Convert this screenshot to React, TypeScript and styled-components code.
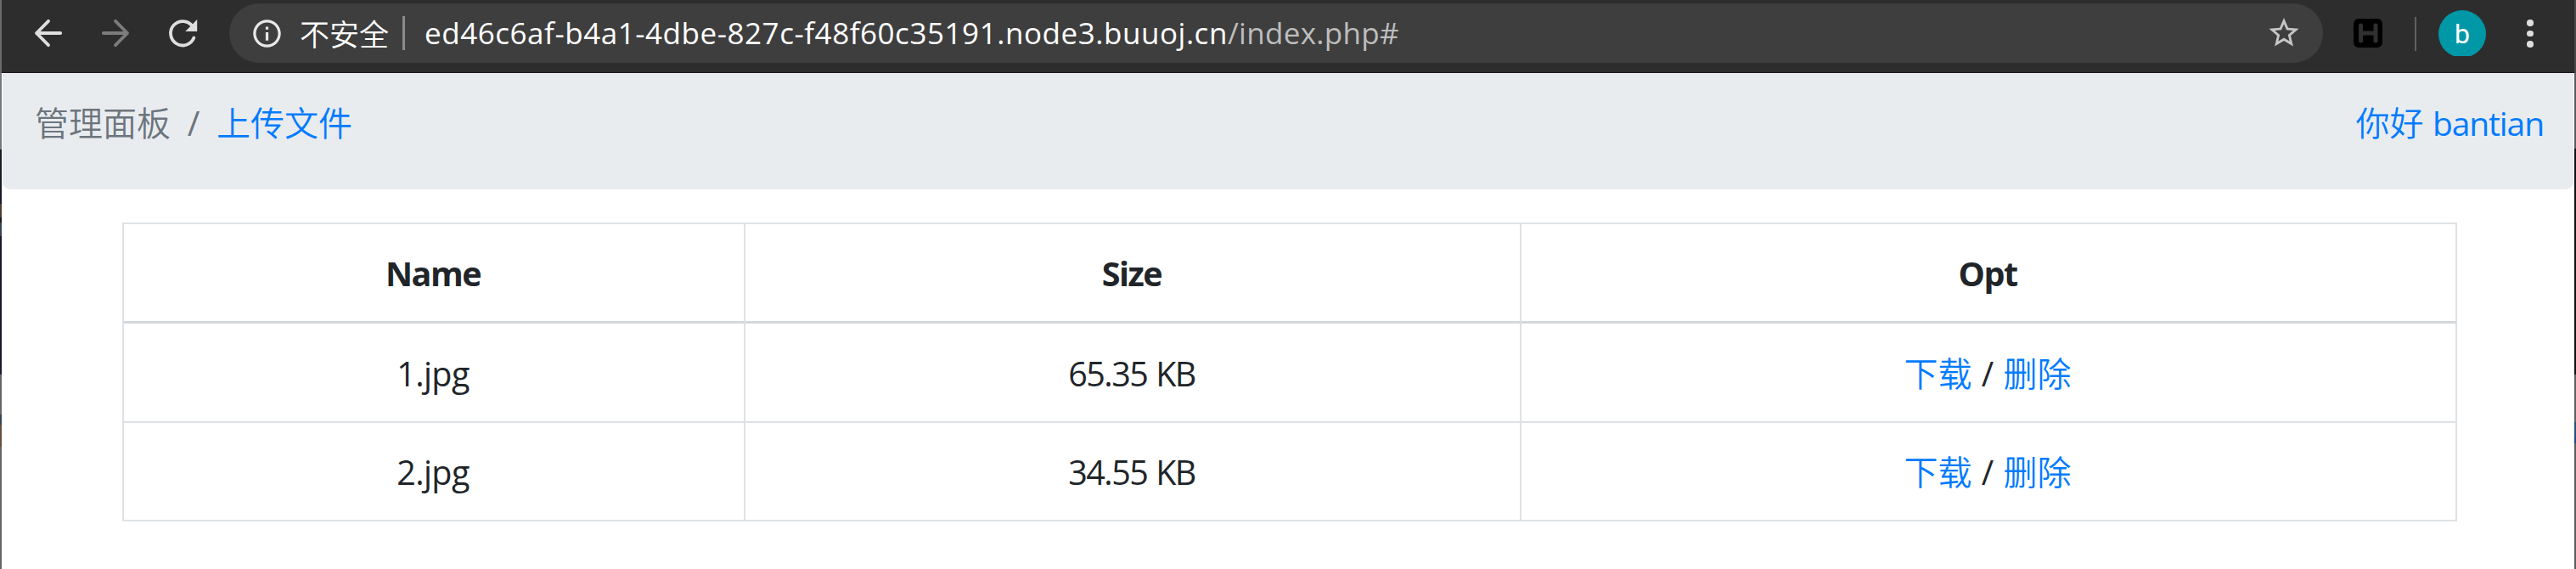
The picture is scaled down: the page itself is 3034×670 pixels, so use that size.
import React from 'react';
import styled, { createGlobalStyle } from 'styled-components';

const Global = createGlobalStyle`
  * { box-sizing: border-box; }
  body { margin: 0; background: #fff; overflow: hidden; }
`;

const latin = `"Open Sans", "Noto Sans CJK SC", sans-serif`;

const Window = styled.div`
  display: grid;
  grid-template-columns: 2px 1fr 2px;
  width: 3034px;
  height: 670px;
  font-family: ${latin};
`;

const LeftEdge = styled.div`
  background: linear-gradient(#6b6b6b 0 86px, #77787a 86px 176px, #1b1b27 176px 240px, #4b3d35 240px 256px,
    #1b1b27 256px 262px, #39434d 262px 278px, #1b1b27 278px 441px, #66676d 441px 488px, #3d4350 488px 500px,
    #66503f 500px 526px, #65666b 526px);
`;

const RightEdge = styled.div`
  background: linear-gradient(#48484a 0 86px, #5c5c5e 86px 175px, #111113 175px 441px, #606062 441px 497px,
    #285078 497px 516px, #1d4a86 516px 522px, #5c5c5e 522px);
`;

const Main = styled.div`
  display: flex;
  flex-direction: column;
  min-width: 0;
`;

const Toolbar = styled.header`
  display: flex;
  align-items: flex-start;
  height: 86px;
  background: #2d2d2d;
  border-bottom: 1px solid #1c1718;
`;

const NavButtons = styled.div`
  display: flex;
  gap: 31px;
  padding: 15px 0 0 31px;
  width: 268px;
`;

const Glyph = styled.svg<{ $size: number }>`
  display: block;
  flex: none;
  width: ${(p) => p.$size}px;
  height: ${(p) => p.$size}px;
`;

const Omnibox = styled.div`
  display: flex;
  align-items: center;
  width: 2466px;
  height: 70px;
  margin-top: 4px;
  padding: 0 22px 0 25px;
  border-radius: 35px;
  background: #3e3e3e;
`;

const Insecure = styled.span`
  width: 106px;
  margin: 0 15px 0 19px;
  font: 350 35px/70px "Noto Sans CJK SC", sans-serif;
  color: #fff;
  white-space: nowrap;
`;

const Divider = styled.span<{ $color: string; $width: number }>`
  flex: none;
  width: ${(p) => p.$width}px;
  height: 40px;
  background: ${(p) => p.$color};
`;

const Url = styled.span`
  flex: 1;
  margin-left: 23px;
  font-size: 35px;
  line-height: 70px;
  color: #fff;
  white-space: nowrap;
`;

const Host = styled.span`
  letter-spacing: 0.54px;
`;

const Path = styled.span`
  color: #bdbdbd;
  letter-spacing: 0.3px;
`;

const Actions = styled.div`
  display: flex;
  padding-left: 36px;
`;

const Extension = styled.div`
  margin-top: 22px;
`;

const ActionDivider = styled(Divider)`
  margin: 20px 26px 0 38px;
`;

const AvatarClip = styled.div`
  height: 54px;
  margin-top: 12px;
  overflow: hidden;
`;

const Avatar = styled.div`
  width: 56px;
  height: 56px;
  border-radius: 50%;
  background: #0097a7;
  color: #fff;
  font: 400 32px/56px Roboto, sans-serif;
  text-align: center;
`;

const Menu = styled.div`
  display: flex;
  flex-direction: column;
  gap: 5px;
  margin: 23px 0 0 48px;
`;

const Dot = styled.span`
  width: 7.5px;
  height: 7.5px;
  border-radius: 50%;
  background: #dedede;
`;

const Breadcrumb = styled.nav`
  display: flex;
  justify-content: space-between;
  height: 137px;
  margin: 0 1px;
  padding: 29px 35px 0 38px;
  border-radius: 0 0 9px 9px;
  background: #e9ecef;
  font-size: 40px;
  font-weight: 350;
  line-height: 60px;
  color: #6c757d;
`;

const Crumbs = styled.div`
  display: flex;
`;

const Slash = styled.span`
  width: 54px;
  font-weight: 400;
  text-align: center;
`;

const Link = styled.a`
  color: #007bff;
  text-decoration: none;
`;

const UserName = styled.span`
  font-size: 39px;
  font-weight: 400;
  letter-spacing: -1.1px;
`;

const Files = styled.table`
  width: 2750px;
  margin: 39px 0 0 142px;
  border-collapse: separate;
  border-spacing: 0;
  border-top: 2px solid #dee2e6;
  border-left: 2px solid #dee2e6;
  table-layout: fixed;
  font-size: 39.5px;
  color: #212529;
  text-align: center;
`;

const Column = styled.col<{ $width: number }>`
  width: ${(p) => p.$width}px;
`;

const HeadCell = styled.th`
  height: 117px;
  padding: 2px 2px 0 0;
  border-right: 2px solid #dee2e6;
  border-bottom: 3px solid #d3d8dc;
  font-weight: 700;
  letter-spacing: -1.5px;
  line-height: 60px;
`;

const Cell = styled.td<{ $tracking?: number }>`
  height: 116.5px;
  padding: 3px 2px 0 0;
  border-right: 2px solid #dee2e6;
  border-bottom: 2px solid #dee2e6;
  font-weight: 400;
  letter-spacing: ${(p) => p.$tracking ?? 0}px;
  word-spacing: 1px;
  line-height: 60px;
`;

const ActionLink = styled(Link)`
  font-size: 40px;
  font-weight: 350;
`;

const files = [
  { name: '1.jpg', size: '65.35 KB' },
  { name: '2.jpg', size: '34.55 KB' },
];

export default function App() {
  return (
    <Window>
      <Global />
      <LeftEdge />
      <Main>
        <Toolbar>
          <NavButtons>
            <Glyph $size={48} viewBox="0 0 24 24" fill="none" stroke="#dedede" strokeWidth="1.9" strokeLinecap="round" strokeLinejoin="round">
              <path d="M19.1 12H5M12 4.9 5 12l7 7.1" />
            </Glyph>
            <Glyph $size={48} viewBox="0 0 24 24" fill="none" stroke="#7c7c7c" strokeWidth="1.9" strokeLinecap="round" strokeLinejoin="round">
              <path d="M4.9 12H19M12 4.9l7 7.1-7 7.1" />
            </Glyph>
            <Glyph $size={48} viewBox="0 0 24 24">
              <path d="M17.8 7.9A7.1 7.1 0 1 0 18.7 14.7" fill="none" stroke="#dedede" strokeWidth="1.9" strokeLinecap="round" />
              <path d="M20.6 4v7h-7z" fill="#dedede" />
            </Glyph>
          </NavButtons>
          <Omnibox>
            <Glyph $size={39} viewBox="0 0 24 24" fill="#e8e8e8">
              <path d="M11 7h2v2h-2zm0 4h2v6h-2zm1-9C6.48 2 2 6.48 2 12s4.48 10 10 10 10-4.48 10-10S17.52 2 12 2zm0 18c-4.41 0-8-3.59-8-8s3.59-8 8-8 8 3.59 8 8-3.59 8-8 8z" />
            </Glyph>
            <Insecure>不安全</Insecure>
            <Divider $color="#8b8b8b" $width={3} />
            <Url>
              <Host>ed46c6af-b4a1-4dbe-827c-f48f60c35191.node3.buuoj.cn</Host>
              <Path>/index.php#</Path>
            </Url>
            <Glyph $size={48} viewBox="0 0 24 24" fill="#c6c6c6">
              <path d="M20.8 9.4l-6.3-.55L12 3 9.5 8.85l-6.3.55 4.8 4.15L6.55 19.8 12 16.5l5.45 3.3L16 13.55zM12 14.7l-3.3 2 .88-3.75-2.9-2.5 3.8-.33L12 6.6l1.5 3.5 3.8.34-2.9 2.5.9 3.76z" />
            </Glyph>
          </Omnibox>
          <Actions>
            <Extension>
              <Glyph $size={34} viewBox="0 0 34 34">
                <rect width="34" height="34" rx="6" fill="#000" />
                <path d="M8.6 8v18M26 8v18M8.6 17H26" stroke="#303030" strokeWidth="5" strokeLinecap="round" />
              </Glyph>
            </Extension>
            <ActionDivider $color="#626062" $width={2} />
            <AvatarClip>
              <Avatar>b</Avatar>
            </AvatarClip>
            <Menu>
              <Dot />
              <Dot />
              <Dot />
            </Menu>
          </Actions>
        </Toolbar>
        <Breadcrumb>
          <Crumbs>
            <span>管理面板</span>
            <Slash>/</Slash>
            <Link>上传文件</Link>
          </Crumbs>
          <Link>
            你好 <UserName>bantian</UserName>
          </Link>
        </Breadcrumb>
        <Files>
          <colgroup>
            <Column $width={732} />
            <Column $width={914} />
            <Column $width={1102} />
          </colgroup>
          <thead>
            <tr>
              <HeadCell>Name</HeadCell>
              <HeadCell>Size</HeadCell>
              <HeadCell>Opt</HeadCell>
            </tr>
          </thead>
          <tbody>
            {files.map((f) => (
              <tr key={f.name}>
                <Cell $tracking={-0.6}>{f.name}</Cell>
                <Cell $tracking={-1.5}>{f.size}</Cell>
                <Cell>
                  <ActionLink>下载</ActionLink> / <ActionLink>删除</ActionLink>
                </Cell>
              </tr>
            ))}
          </tbody>
        </Files>
      </Main>
      <RightEdge />
    </Window>
  );
}
